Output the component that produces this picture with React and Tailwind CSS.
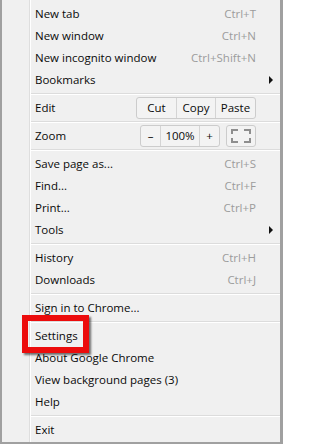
import React from 'react';

const font = { fontFamily: '"Open Sans", "Noto Sans", sans-serif' };

function Item({ label, shortcut, arrow }) {
  return (
    <div className="flex h-[22px] items-center justify-between pl-[4px] pr-[24px]">
      <span className="text-[#0a0a0a]">{label}</span>
      {shortcut && <span className="text-[#9c9c9c]">{shortcut}</span>}
      {arrow && (
        <span className="mr-[-17px] h-0 w-0 border-y-[4px] border-l-[4px] border-y-transparent border-l-[#111111]" />
      )}
    </div>
  );
}

function Sep() {
  return <div className="my-[2px] border-t border-b border-t-[#dcdcdc] border-b-white" />;
}

function FullscreenIcon() {
  return (
    <svg width="20" height="14" viewBox="0 0 20 14">
      <g fill="none" stroke="#8e8e8e" strokeWidth="2">
        <path d="M1 5V1h6" />
        <path d="M13 1h6v4" />
        <path d="M1 9v4h6" />
        <path d="M13 13h6V9" />
      </g>
    </svg>
  );
}

export default function App() {
  return (
    <div
      className="relative flex h-[444px] w-[283px] border-b-2 border-l-2 border-r-[3px] border-[#a0a0a0] bg-[#f0f0f0] text-[11.5px]"
      style={font}
    >
      <div className="w-[28px] shrink-0 border-r border-[#dedede]" />
      <div className="flex-1 border-l border-white pt-[3px]">
        <Item label="New tab" shortcut="Ctrl+T" />
        <Item label="New window" shortcut="Ctrl+N" />
        <Item label="New incognito window" shortcut="Ctrl+Shift+N" />
        <Item label="Bookmarks" arrow />
        <Sep />
        <div className="flex h-[22px] items-center justify-between pl-[4px] pr-[24px]">
          <span className="text-[#0a0a0a]">Edit</span>
          <div className="flex h-[22px] rounded-[3px] border border-[#cccccc] bg-[#f3f3f3] text-[#0a0a0a]">
            <span className="flex w-[40px] items-center justify-center border-r border-[#d4d4d4]">Cut</span>
            <span className="flex w-[39px] items-center justify-center border-r border-[#d4d4d4]">Copy</span>
            <span className="flex w-[39px] items-center justify-center">Paste</span>
          </div>
        </div>
        <Sep />
        <div className="flex h-[22px] items-center justify-between pl-[4px] pr-[24px]">
          <span className="text-[#0a0a0a]">Zoom</span>
          <div className="flex gap-[6px]">
            <div className="flex h-[22px] rounded-[3px] border border-[#cccccc] bg-[#f3f3f3] text-[#0a0a0a]">
              <span className="flex w-[20px] items-center justify-center border-r border-[#d4d4d4]">–</span>
              <span className="flex w-[39px] items-center justify-center border-r border-[#d4d4d4]">100%</span>
              <span className="flex w-[19px] items-center justify-center">+</span>
            </div>
            <div className="flex h-[22px] w-[30px] items-center justify-center rounded-[3px] border border-[#cccccc] bg-[#f3f3f3]">
              <FullscreenIcon />
            </div>
          </div>
        </div>
        <Sep />
        <Item label="Save page as..." shortcut="Ctrl+S" />
        <Item label="Find..." shortcut="Ctrl+F" />
        <Item label="Print..." shortcut="Ctrl+P" />
        <Item label="Tools" arrow />
        <Sep />
        <Item label="History" shortcut="Ctrl+H" />
        <Item label="Downloads" shortcut="Ctrl+J" />
        <Sep />
        <Item label="Sign in to Chrome..." />
        <Sep />
        <Item label="Settings" />
        <Item label="About Google Chrome" />
        <Item label="View background pages (3)" />
        <Item label="Help" />
        <Sep />
        <Item label="Exit" />
      </div>
      <div className="absolute left-[20px] top-[315px] h-[38px] w-[67px] border-[6px] border-[#ec0c0c] shadow-[2px_2px_2px_rgba(0,0,0,0.55)]" />
    </div>
  );
}
